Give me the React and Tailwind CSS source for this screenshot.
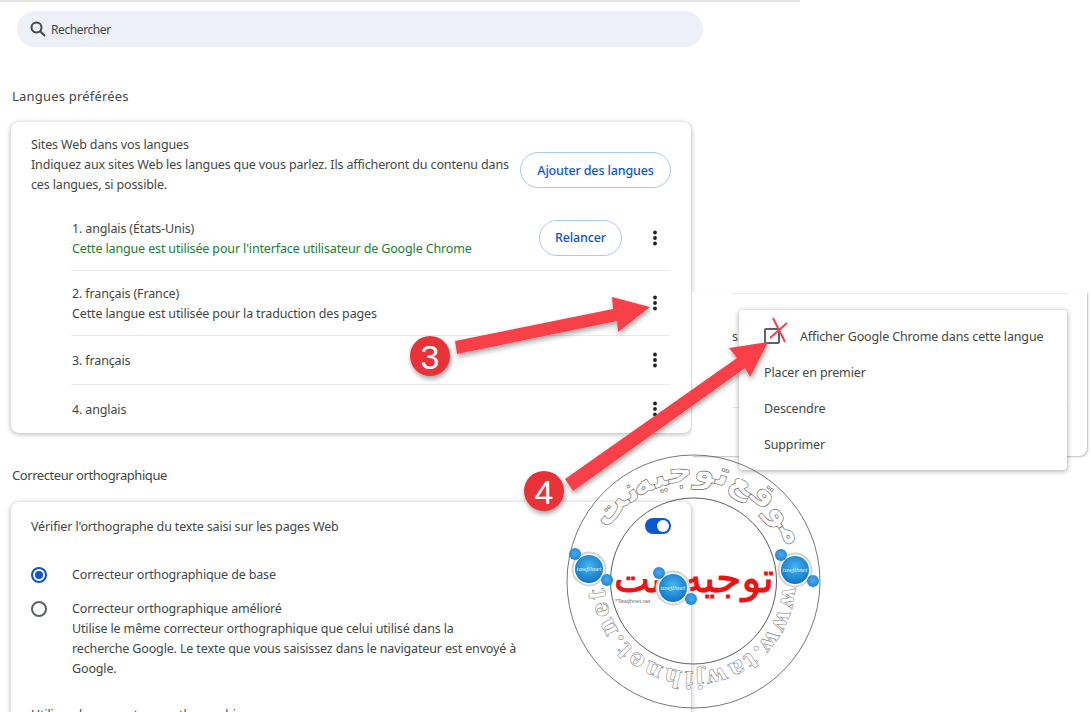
const FONT = "font-['Noto_Sans',sans-serif]"

const Dots = () => (
  <svg width="16" height="16" viewBox="0 0 16 16" fill="#202124">
    <circle cx="8" cy="2.5" r="1.9" />
    <circle cx="8" cy="8" r="1.9" />
    <circle cx="8" cy="13.5" r="1.9" />
  </svg>
)

const LANGS = [
  { label: '1. anglais (États-Unis)', note: "Cette langue est utilisée pour l'interface utilisateur de Google Chrome", green: true, button: 'Relancer', h: 'h-[65px]' },
  { label: '2. français (France)', note: 'Cette langue est utilisée pour la traduction des pages', h: 'h-[65px]' },
  { label: '3. français', h: 'h-[49px]' },
  { label: '4. anglais', h: 'h-[48px]' },
]

function LangRow({ lang, last }) {
  return (
    <div className={`flex items-center ${lang.h} ${last ? '' : 'border-b border-[#e8eaed]'}`}>
      <div className="flex-1 pl-[1px] pt-[2px] leading-5">
        <div>{lang.label}</div>
        {lang.note && <div className={lang.green ? 'text-[#188038]' : ''}>{lang.note}</div>}
      </div>
      {lang.button && (
        <button className="h-[36px] w-[83px] rounded-full border border-[#a8c7fa] pt-[1px] font-medium text-[#0b57d0]">
          {lang.button}
        </button>
      )}
      <div className="ml-[25px] mr-[7px] flex w-4 justify-center">
        <Dots />
      </div>
    </div>
  )
}

const Radio = ({ on }) => (
  <span className={`flex h-[16px] w-[16px] shrink-0 items-center justify-center rounded-full border-2 ${on ? 'border-[#0b57d0]' : 'border-[#5f6368]'}`}>
    {on && <span className="h-[8px] w-[8px] rounded-full bg-[#0b57d0]" />}
  </span>
)

function Ball({ cx, cy }) {
  return (
    <g>
      <circle cx={cx} cy={cy} r="16.5" fill="#fff" stroke="#d3d3d3" strokeWidth="2" />
      <circle cx={cx} cy={cy} r="14" fill="url(#ball)" />
      <circle cx={cx - 14} cy={cy - 15} r="6" fill="url(#sat)" />
      <circle cx={cx + 18} cy={cy + 11} r="6" fill="url(#sat)" />
      <text x={cx} y={cy + 2} textAnchor="middle" fontSize="7" fill="#e8f4ff" fontFamily="Liberation Serif, serif" fontStyle="italic">
        tawjihnet
      </text>
    </g>
  )
}

const RING_WORDS = [
  { word: 'نت', at: '25%' },
  { word: 'توجيه', at: '46%' },
  { word: 'موقع', at: '75%' },
]

// watermark stamp, coordinates are page pixels
function Stamp() {
  return (
    <svg className="pointer-events-none absolute left-0 top-0" width="1091" height="712" viewBox="0 0 1091 712">
      <defs>
        <radialGradient id="ball" cx="50%" cy="40%" r="60%">
          <stop offset="0%" stopColor="#49b4ee" />
          <stop offset="100%" stopColor="#0f76c8" />
        </radialGradient>
        <radialGradient id="sat" cx="50%" cy="45%" r="60%">
          <stop offset="0%" stopColor="#4aa8f0" />
          <stop offset="100%" stopColor="#1f82d8" />
        </radialGradient>
        <path id="ringTop" d="M 593.5 581.5 A 100 100 0 0 1 793.5 581.5" />
        <path id="ringBottom" d="M 782 592 A 89 89 0 0 1 605 592" />
      </defs>
      <circle cx="693.5" cy="581.5" r="126.5" fill="none" stroke="#555" strokeWidth="0.8" />
      <circle cx="693.5" cy="581" r="83" fill="none" stroke="#333" strokeWidth="0.8" />
      {RING_WORDS.map(({ word, at }) => (
        <text key={word} fontFamily="DejaVu Sans, sans-serif" fontWeight="700" fontSize="34" fill="#fff" stroke="#666" strokeWidth="0.6">
          <textPath href="#ringTop" startOffset={at} textAnchor="middle">{word}</textPath>
        </text>
      ))}
      <text fontFamily="DejaVu Serif, serif" fontWeight="700" fontSize="24" fill="#fff" stroke="#777" strokeWidth="0.5" letterSpacing="1.5">
        <textPath href="#ringBottom" startOffset="50%" textAnchor="middle">www.tawjihnet.net</textPath>
      </text>
      <text x="774" y="592" textAnchor="end" fontFamily="DejaVu Sans, sans-serif" fontSize="41" fill="#ee1111" stroke="#ee1111" strokeWidth="0.9">توجيه</text>
      <text x="614" y="592" fontFamily="DejaVu Sans, sans-serif" fontSize="38" fill="#ee1111" stroke="#ee1111" strokeWidth="0.9">نت</text>
      <text x="615" y="603" fontFamily="Liberation Sans, sans-serif" fontSize="6" fill="#777">*Tawjihnet.net</text>
      <Ball cx={589} cy={569} />
      <Ball cx={795} cy={570} />
      <Ball cx={673} cy={588} />
    </svg>
  )
}

// red arrows and numbered steps drawn over the page
function Annotations() {
  return (
    <svg className="pointer-events-none absolute left-0 top-0" width="1091" height="712" viewBox="0 0 1091 712">
      <defs>
        <filter id="soft" x="-20%" y="-20%" width="140%" height="140%">
          <feDropShadow dx="1" dy="3" stdDeviation="2.5" floodColor="#000" floodOpacity="0.35" />
        </filter>
      </defs>
      <g filter="url(#soft)" fill="#f9404a">
        <polygon points="455,341 613,309 612,297 650,307 618,332 617,321 457,354" />
        <polygon points="565,479 737,358 729,348 768,342 750,377 745,368 573,491" />
        <circle cx="430" cy="356" r="20" fill="#e93338" />
        <circle cx="544" cy="491" r="20" fill="#e93338" />
      </g>
      <text x="430" y="369" textAnchor="middle" fontFamily="Liberation Sans, sans-serif" fontSize="34" fill="#fff">3</text>
      <text x="544" y="504" textAnchor="middle" fontFamily="Liberation Sans, sans-serif" fontSize="34" fill="#fff">4</text>
      <path d="M773 318 L785 342 M787 323 L770 338" stroke="#f9404a" strokeWidth="2" fill="none" />
    </svg>
  )
}

export default function App() {
  return (
    <div className={`relative h-[712px] w-[1091px] overflow-hidden bg-white text-[12.5px] tracking-[-0.14px] text-[#444746] ${FONT}`}>
      <div className="w-[800px] border-t-2 border-[#e3e3e3]">
        <div className="pl-[11px] pr-[109px]">
          {/* Search */}
          <div className="ml-[6px] mt-[9px] flex h-[36px] w-[686px] items-center rounded-full bg-[#edf0f8] pl-[12px]">
            <svg width="18" height="18" viewBox="0 0 18 18" fill="none" stroke="#444746" strokeWidth="2">
              <circle cx="7.5" cy="7.5" r="5" />
              <path d="M11.2 11.2 L16 16" />
            </svg>
            <span className="ml-[4px] mt-[1px] text-[12px] tracking-[-0.4px]">Rechercher</span>
          </div>

          <h2 className="mb-[16px] ml-[1px] mt-[39px] text-[13px] font-normal leading-5 tracking-[0.2px]">Langues préférées</h2>

          {/* Languages card */}
          <section className="h-[311px] w-[680px] rounded-[8px] bg-white shadow-[0_1px_4px_1px_rgba(60,64,67,0.3)]">
            <div className="flex h-[84px] items-start px-[20px] pt-[13px] leading-5">
              <div className="w-[489px]">
                <div>Sites Web dans vos langues</div>
                <div>Indiquez aux sites Web les langues que vous parlez. Ils afficheront du contenu dans ces langues, si possible.</div>
              </div>
              <button className="mt-[17px] h-[36px] w-[151px] rounded-full border border-[#a8c7fa] pt-[1px] font-medium text-[#0b57d0]">
                Ajouter des langues
              </button>
            </div>
            <div className="ml-[60px] mr-[21px]">
              {LANGS.map((lang, i) => (
                <LangRow key={lang.label} lang={lang} last={i === LANGS.length - 1} />
              ))}
            </div>
          </section>

          <h2 className="mb-[17px] ml-[1px] mt-[32px] text-[13px] font-normal leading-5 tracking-[-0.44px]">Correcteur orthographique</h2>

          {/* Spell check card */}
          <section className="h-[260px] w-[680px] rounded-[8px] bg-white px-[20px] pt-[15px] leading-5 shadow-[0_1px_4px_1px_rgba(60,64,67,0.3)]">
            <div className="flex items-start justify-between">
              <div>Vérifier l'orthographe du texte saisi sur les pages Web</div>
              <span className="mt-[1px] flex h-[16px] w-[26px] items-center justify-end rounded-full bg-[#0b57d0] pr-[2px]">
                <span className="h-[12px] w-[12px] rounded-full bg-white" />
              </span>
            </div>
            <div className="mt-[28px] flex items-center gap-[25px]">
              <Radio on />
              <span>Correcteur orthographique de base</span>
            </div>
            <div className="mt-[14px] flex items-start gap-[25px]">
              <span className="pt-[2px]"><Radio /></span>
              <div className="whitespace-nowrap">
                <div>Correcteur orthographique amélioré</div>
                <div>Utilise le même correcteur orthographique que celui utilisé dans la<br />recherche Google. Le texte que vous saisissez dans le navigateur est envoyé à<br />Google.</div>
              </div>
            </div>
            <div className="mt-[26px]">Utiliser des correcteurs orthographiques</div>
          </section>
        </div>
      </div>

      {/* Pasted fragment of the page behind the menu */}
      <div className="absolute left-[692px] top-[292px] h-[164px] w-[395px] rounded-br-[8px] bg-white pl-[40px] pr-[19px] shadow-[1px_1px_2px_rgba(60,64,67,0.35)]">
        <div className="mt-[1px] border-t border-[#e8eaed]" />
        <div className="mt-[33px] leading-5">s</div>
        <div className="mt-[60px] border-t border-[#e8eaed]" />
      </div>

      {/* Context menu */}
      <div className="absolute left-[739px] top-[310px] flex h-[160px] w-[328px] flex-col rounded-[4px] bg-white pl-[25px] pt-[9px] shadow-[0_1px_4px_1px_rgba(60,64,67,0.35)]">
        <div className="flex h-[36px] items-center">
          <span className="-mt-[3px] mr-[20px] h-[16px] w-[16px] rounded-[2px] border-2 border-[#5f6368]" />
          <span>Afficher Google Chrome dans cette langue</span>
        </div>
        <div className="flex h-[36px] items-center">Placer en premier</div>
        <div className="flex h-[36px] items-center">Descendre</div>
        <div className="flex h-[36px] items-center">Supprimer</div>
      </div>

      <Stamp />
      <Annotations />
    </div>
  )
}
